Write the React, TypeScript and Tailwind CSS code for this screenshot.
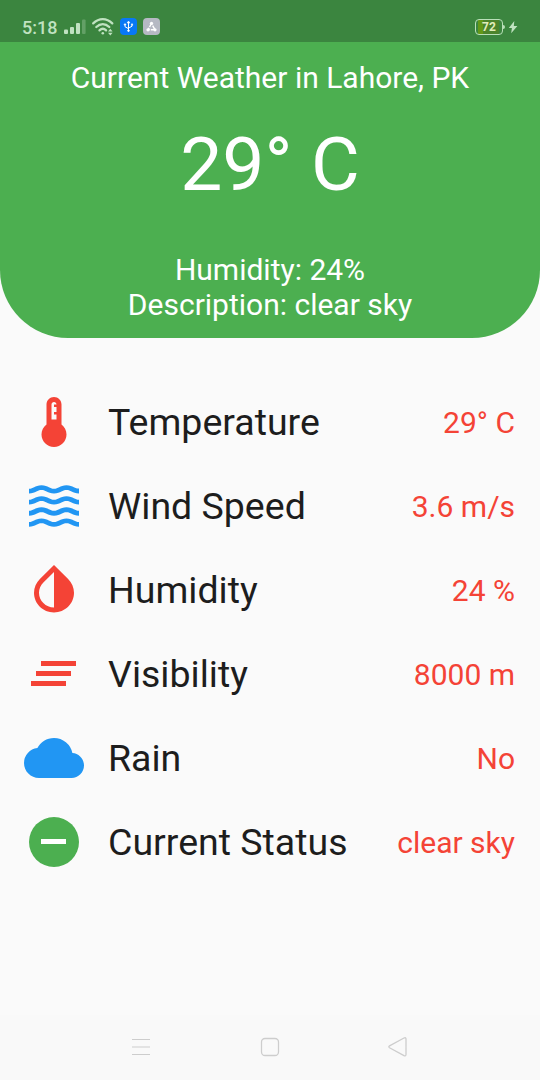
import type { ReactNode } from "react";
import { MdCloud, MdInvertColors, MdWaves } from "react-icons/md";

function Thermostat() {
  return (
    <svg viewBox="0 0 24 24" className="size-[60px] fill-[#f44336]">
      <path d="M15 13V5c0-1.66-1.34-3-3-3S9 3.34 9 5v8c-1.21.91-2 2.37-2 4 0 2.76 2.24 5 5 5s5-2.24 5-5c0-1.63-.79-3.09-2-4zm-4-8c0-.55.45-1 1-1s1 .45 1 1h-1v1h1v2h-1v1h1v2h-2V5z" />
    </svg>
  );
}

function SlantedLines() {
  return (
    <svg viewBox="0 0 60 60" className="size-[60px] fill-[#f44336]">
      <path d="M17 17h35v5H17zM12 27h35v5H12zM7 37h35v5H7z" />
    </svg>
  );
}

function MinusCircle() {
  return (
    <svg viewBox="0 0 60 60" className="size-[60px]">
      <circle cx="30" cy="30" r="25" className="fill-[#4caf50]" />
      <rect x="17" y="27" width="25" height="5" className="fill-white" />
    </svg>
  );
}

function StatusBar() {
  return (
    <div className="flex h-[42px] items-start bg-[#3b853f] pl-[22px] pr-[22px] pt-[17px] text-[#c0e2c1]">
      <span className="w-[42px] text-[18px] leading-[21px] font-medium">5:18</span>
      <svg className="mt-[2px] h-[16px] w-[22px]" viewBox="0 0 22 16" fill="currentColor">
        <rect x="0" y="10.5" width="4" height="4.5" rx="1" />
        <rect x="6" y="8" width="4" height="7" rx="1" />
        <rect x="12" y="4" width="4" height="11" rx="1" />
        <rect x="18" y="0.5" width="3.6" height="14.5" rx="1" opacity="0.3" />
      </svg>
      <svg className="ml-[5px] mt-[1px] h-[18px] w-[24px]" viewBox="0 0 24 18" fill="none" stroke="currentColor" strokeWidth="2.3" strokeLinecap="round">
        <path d="M2.2 5.4C8-.2 15.500-.2 21.300 5.400" />
        <path d="M5.300 9c4-3.700 9-3.700 13 0" />
        <path d="M8.500 12.400c2-1.900 4.700-1.900 6.600 0" />
        <circle cx="11.800" cy="15.200" r="1.300" fill="currentColor" stroke="none" />
        <path d="M17 13.500l2.300-2.700 2.300 2.700zM17 14.800l2.300 2.700 2.300-2.700z" fill="currentColor" stroke="none" />
      </svg>
      <svg className="ml-[5px] mt-[1px] size-[17px]" viewBox="0 0 17 17">
        <rect width="17" height="17" rx="4" fill="#0878f5" />
        <g fill="none" stroke="white" strokeWidth="1">
          <path d="M8.500 13V4M5 6.500v2.200l3.500 2M12 6.500v1.700l-3.500 2" />
          <path d="M7 5l1.500-2L10 5z" fill="white" strokeWidth=".5" />
          <circle cx="5" cy="6.500" r=".7" fill="white" />
          <circle cx="8.500" cy="12.700" r=".8" fill="white" />
          <path d="M11.300 5.800h1.400v1.400h-1.400z" fill="white" strokeWidth=".3" />
        </g>
      </svg>
      <svg className="ml-[6px] mt-[1px] size-[17px]" viewBox="0 0 17 17">
        <rect width="17" height="17" rx="4" fill="#b6b9c3" />
        <path d="M8.500 5.500L5 11.800h7z" fill="none" stroke="white" strokeWidth="1.500" strokeDasharray="4 1" />
        <circle cx="8.500" cy="5.300" r="1.600" fill="white" />
        <circle cx="5" cy="11.800" r="1.600" fill="white" />
        <circle cx="12" cy="11.800" r="1.600" fill="white" />
      </svg>
      <div className="ml-auto mt-[2px] flex items-center">
        <div className="flex h-[16px] w-[28px] items-center justify-center rounded-[4px] border-[1.5px] border-[#b9dfb9] bg-[linear-gradient(90deg,transparent_2px,#639817_2px,#639817_7px,#4c842c_7px,#4c842c_23px,transparent_23px)] text-[12px] leading-none font-bold text-[#e2edbb]">
          72
        </div>
        <div className="h-[4px] w-[2px] rounded-r bg-[#b9dfb9]" />
        <svg className="ml-[3px] h-[14px] w-[10px]" viewBox="0 0 10 14" fill="currentColor">
          <path d="M6.300 1L.8 8h3.100L3.200 13.200 9.400 5.900H5.800z" />
        </svg>
      </div>
    </div>
  );
}

type RowProps = { icon: ReactNode; label: string; value: string };

function Row({ icon, label, value }: RowProps) {
  return (
    <li className="flex h-[84px] items-center pl-6 pr-[25px]">
      {icon}
      <span className="ml-6 text-[37.5px] leading-[44px] text-[#1d1d1d]">{label}</span>
      <span className="ml-auto pt-[2px] text-[30px] leading-9 text-[#f44336]">{value}</span>
    </li>
  );
}

const rows: RowProps[] = [
  { icon: <Thermostat />, label: "Temperature", value: "29° C" },
  { icon: <MdWaves className="size-[60px] text-[#2196f3]" />, label: "Wind Speed", value: "3.6 m/s" },
  { icon: <MdInvertColors className="size-[60px] text-[#f44336]" />, label: "Humidity", value: "24 %" },
  { icon: <SlantedLines />, label: "Visibility", value: "8000 m" },
  { icon: <MdCloud className="size-[60px] text-[#2196f3]" />, label: "Rain", value: "No" },
  { icon: <MinusCircle />, label: "Current Status", value: "clear sky" },
];

function NavBar() {
  return (
    <nav className="flex h-[65px] items-center justify-between bg-[#f9f9f9] px-[130px] pb-[2px] text-[#cdcdcd]">
      <svg className="size-[22px]" viewBox="0 0 22 22" fill="none" stroke="currentColor" strokeWidth="1.200">
        <path d="M2 3.500h18M2 11h18M2 18.500h18" />
      </svg>
      <svg className="size-[22px]" viewBox="0 0 22 22" fill="none" stroke="currentColor" strokeWidth="1.300">
        <rect x="2.500" y="2.500" width="17" height="17" rx="3.500" />
      </svg>
      <svg className="size-[22px]" viewBox="0 0 22 22" fill="none" stroke="currentColor" strokeWidth="1.300" strokeLinejoin="round">
        <path d="M1.500 9.900L16 2q2-.8 2 1v15.600q0 1.800-2 1L1.500 11.700q-1.300-.9 0-1.800z" />
      </svg>
    </nav>
  );
}

export default function App() {
  return (
    <div className="flex h-[1080px] w-[540px] flex-col overflow-hidden bg-[#fafafa] font-[Roboto,sans-serif]">
      <StatusBar />
      <header className="flex h-[296px] flex-col items-center rounded-b-[68px] bg-[#4caf50] pt-[18px] text-[30px] leading-[35px] text-white">
        <h1>Current Weather in Lahore, PK</h1>
        <p className="mt-[25px] text-[75px] leading-[88px]">29° C</p>
        <p className="mt-[44px]">Humidity: 24%</p>
        <p>Description: clear sky</p>
      </header>
      <ul className="mt-[42px] flex-1">
        {rows.map((row) => (
          <Row key={row.label} {...row} />
        ))}
      </ul>
      <NavBar />
    </div>
  );
}
